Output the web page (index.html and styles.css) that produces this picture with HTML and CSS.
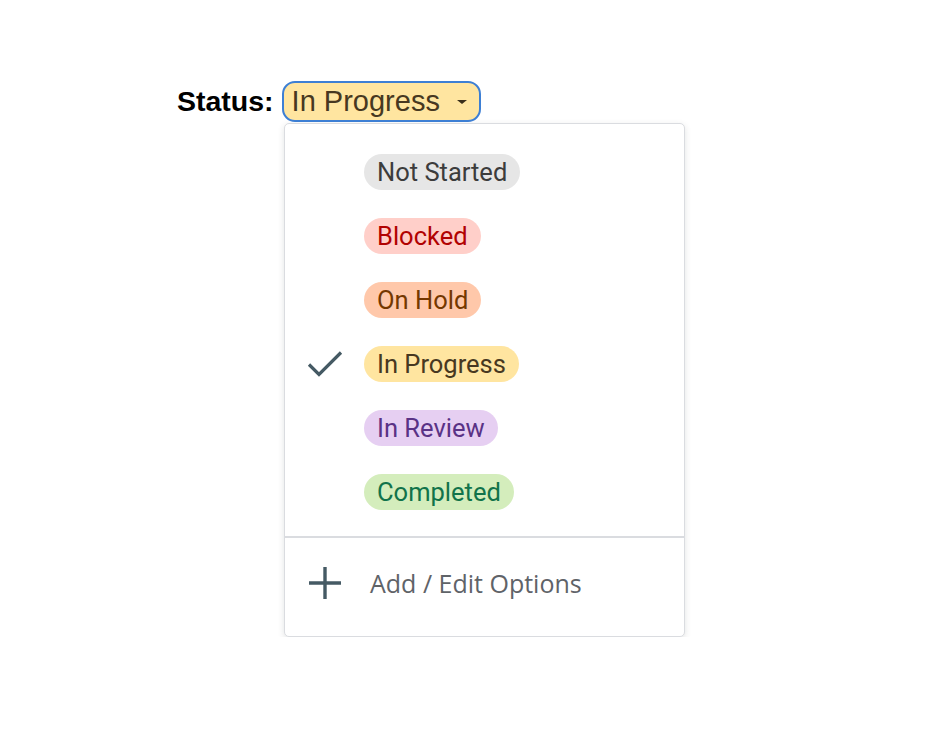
FILE: index.html
```html
<!DOCTYPE html>
<html lang="en">
<head>
  <meta charset="UTF-8" />
  <title>Status dropdown</title>
  <link rel="stylesheet" href="styles.css">
</head>
<body>
  <div class="field">
    <div class="field-row">
      <span class="field-label">Status:</span>
      <button class="status-button">
        In Progress
        <span class="caret"></span>
      </button>
    </div>
    <div class="menu">
      <ul class="options">
        <li class="option"><span class="check"></span><span class="chip chip-grey">Not Started</span></li>
        <li class="option"><span class="check"></span><span class="chip chip-red">Blocked</span></li>
        <li class="option"><span class="check"></span><span class="chip chip-orange">On Hold</span></li>
        <li class="option selected">
          <span class="check">
            <svg width="36" height="26" viewBox="0 0 36 26"><path d="M2 13.5 L12 23.5 L34 1.5" fill="none" stroke="#455a64" stroke-width="3.2"/></svg>
          </span>
          <span class="chip chip-yellow">In Progress</span>
        </li>
        <li class="option"><span class="check"></span><span class="chip chip-purple">In Review</span></li>
        <li class="option"><span class="check"></span><span class="chip chip-green">Completed</span></li>
      </ul>
      <div class="menu-footer">
        <span class="plus">
          <svg width="34" height="34" viewBox="0 0 34 34"><path d="M17 1 V33 M1 17 H33" fill="none" stroke="#455a64" stroke-width="3.4"/></svg>
        </span>
        <span class="footer-text">Add / Edit Options</span>
      </div>
    </div>
  </div>
</body>
</html>
```

FILE: styles.css
```css
body {
  margin: 0;
  background: #fff;
  font-family: "Liberation Sans", Arial, sans-serif;
}
.field {
  padding: 81px 0 0 177px;
}
.field-row {
  display: flex;
  align-items: center;
  gap: 8px;
}
.field-label {
  font-size: 28.5px;
  font-weight: bold;
  color: #000;
}
.status-button {
  display: flex;
  align-items: center;
  height: 41px;
  padding: 0 12px 0 8px;
  background: #ffe5a0;
  border: 2px solid #3d7fd4;
  border-radius: 13px;
  font-family: "Liberation Sans", Arial, sans-serif;
  font-size: 29px;
  color: #473821;
}
.caret {
  margin-left: 17px;
  width: 0;
  height: 0;
  border-left: 5px solid transparent;
  border-right: 5px solid transparent;
  border-top: 4px solid #3a2f1a;
}
.menu {
  width: 399px;
  margin: 1px 0 0 107px;
  background: #fff;
  border: 1px solid #dadce0;
  border-radius: 5px;
  box-shadow: 0 2px 6px rgba(60, 64, 67, 0.15);
}
.options {
  list-style: none;
  margin: 0;
  padding: 30px 0 26px;
  border-bottom: 2px solid #dadce0;
}
.option {
  display: flex;
  align-items: center;
  height: 36px;
  margin-bottom: 28px;
}
.option:last-child {
  margin-bottom: 0;
}
.check {
  display: flex;
  width: 79px;
  padding-left: 22px;
  box-sizing: border-box;
}
.chip {
  display: inline-flex;
  align-items: center;
  height: 36px;
  padding: 0 13px;
  border-radius: 18px;
  font-family: Roboto, sans-serif;
  font-size: 25.5px;
}
.chip-grey { background: #e6e6e6; color: #3c3c3c; }
.chip-red { background: #ffcfc9; color: #b10202; }
.chip-orange { background: #ffc8aa; color: #753800; }
.chip-yellow { background: #ffe5a0; color: #473821; }
.chip-purple { background: #e6cff2; color: #5a3286; }
.chip-green { background: #d4edbc; color: #11734b; }
.menu-footer {
  display: flex;
  align-items: center;
  height: 90px;
  padding: 0 0 8px 23px;
}
.plus {
  display: flex;
  width: 62px;
}
.footer-text {
  font-family: "Open Sans", sans-serif;
  font-size: 25px;
  color: #5f6368;
}
```
